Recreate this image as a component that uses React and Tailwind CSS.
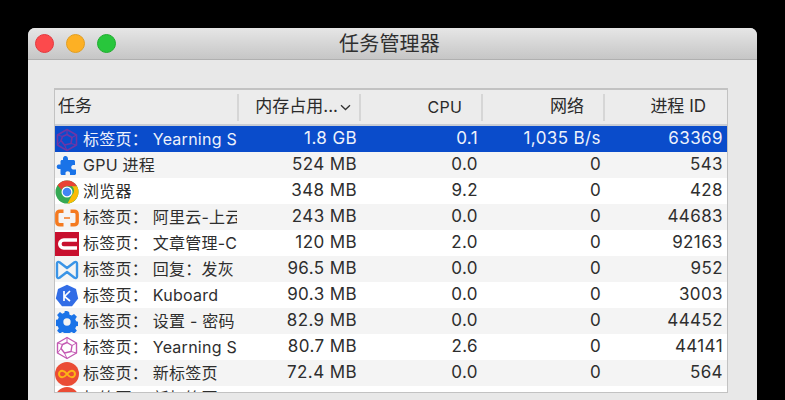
const FONT = "font-['Inter','Noto_Sans_CJK_SC',sans-serif]";

function Hex({ c, w = 1.6 }) {
  return (
    <svg width="22" height="24" viewBox="0 0 22 24" fill="none" stroke={c} strokeWidth={w} strokeLinejoin="round">
      <path d="M11 1.500 20.500 7v10L11 22.500 1.500 17V7z" />
      <path d="M11 6.500 16 9.500l-1 6-6.500 1.500L5 12.500 6.500 8.500z" />
      <path d="M11 1.500v5M20.500 7 16 9.500M15 15.500 20.500 17M8.500 17 11 22.500M5 12.500 1.500 17M6.500 8.500 1.500 7" strokeWidth={w * 0.7} />
    </svg>
  );
}

function Puzzle() {
  return (
    <svg width="22" height="22" viewBox="0 0 22 22">
      <path fill="#1a73e8" d="M8 1.500c2-1 4 0 4 2.500v1h5.500c.8 0 1.500.7 1.500 1.500V10h-1.500c-3-.4-3 5 0 4.500H20v4c0 .8-.7 1.500-1.500 1.500H14v-1.500c.4-3-5-3-4.500 0V20H6c-.8 0-1.500-.7-1.500-1.500V14H3c-3 .4-3-5 0-4.500h1.500V6.500C4.500 5.700 5.200 5 6 5h1V4c0-1 .2-2 1-2.500z" />
    </svg>
  );
}

function Chrome() {
  return (
    <svg width="24" height="24" viewBox="0 0 24 24">
      <circle cx="12" cy="12" r="11.500" fill="#34a853" />
      <path fill="#ea4335" d="M12 .5a11.500 11.500 0 0 1 10 5.800H12a5.700 5.700 0 0 0-5.300 3.600L2.600 5.200A11.500 11.500 0 0 1 12 .5z" />
      <path fill="#fbbc05" d="M22 6.300A11.500 11.500 0 0 1 12.500 23.500l4.500-8.500a5.700 5.700 0 0 0 0-8.700z" />
      <circle cx="12" cy="12" r="5.500" fill="#fff" />
      <circle cx="12" cy="12" r="4.300" fill="#4285f4" />
    </svg>
  );
}

function Aliyun() {
  return (
    <svg width="24" height="18" viewBox="0 0 24 18" fill="none" stroke="#f47a20" strokeWidth="3.400">
      <path d="M8.500 2.200H5C3 2.200 1.800 3.500 1.800 5.200v7.600c0 1.700 1.200 3 3.200 3h3.500M15.500 2.200H19c2 0 3.200 1.300 3.200 3v7.600c0 1.700-1.200 3-3.200 3h-3.500" />
      <path d="M9 9h6" strokeWidth="1.500" />
    </svg>
  );
}

function RedC() {
  return (
    <svg width="24" height="24" viewBox="0 0 24 24">
      <rect width="24" height="24" fill="#c8102e" />
      <path d="M22 8H8.800a4 4 0 0 0 0 8H22" fill="none" stroke="#fff" strokeWidth="3.600" />
    </svg>
  );
}

function Bow() {
  return (
    <svg width="24" height="20" viewBox="0 0 24 20" fill="none" stroke="#3a94e6" strokeWidth="2.400" strokeLinejoin="round">
      <path d="M2 3.500c0-1.500 1.300-2 2.500-1.300L12 8l7.500-5.800c1.200-.7 2.500-.2 2.500 1.300v13c0 1.500-1.300 2-2.500 1.300L12 12l-7.500 5.800C3.300 18.500 2 18 2 16.500z" />
    </svg>
  );
}

function Kube() {
  return (
    <svg width="24" height="24" viewBox="0 0 24 24">
      <path fill="#326de6" d="M12 .8 21 5l2.200 9.500-6.200 7.700H7l-6.200-7.700L3 5z" />
      <path d="M9 7v10M15 7l-5.500 5.500L15 17" fill="none" stroke="#fff" strokeWidth="1.700" />
    </svg>
  );
}

function Gear() {
  return (
    <svg width="22" height="22" viewBox="0 0 24 24">
      <path fill="#1a73e8" fillRule="evenodd" d="M14.300 1l.5 3 2.400 1 2.500-1.800 3.100 3.200-1.800 2.500 1 2.400 3 .5v4.300l-3 .5-1 2.400 1.800 2.500-3.100 3.200-2.500-1.800-2.400 1-.5 3H9.700l-.5-3-2.400-1-2.500 1.800-3.100-3.200 1.800-2.500-1-2.400-3-.5V9.800l3-.5 1-2.400-1.800-2.500 3.100-3.200 2.500 1.800 2.400-1 .5-3zM12 8a4 4 0 1 0 0 8 4 4 0 0 0 0-8z" />
    </svg>
  );
}

function Infinity8() {
  return (
    <svg width="24" height="24" viewBox="0 0 24 24">
      <circle cx="12" cy="12" r="12" fill="#ea4c35" />
      <path d="M12 12c-1.500-2-3-3.200-4.800-3.200a3.200 3.200 0 0 0 0 6.400c1.800 0 3.300-1.200 4.800-3.200s3-3.200 4.800-3.200a3.200 3.200 0 0 1 0 6.400c-1.800 0-3.300-1.200-4.800-3.200z" fill="none" stroke="#fdb515" strokeWidth="2" />
    </svg>
  );
}

const rows = [
  { icon: <Hex c="#6f35a5" />, name: "标签页： Yearning S", mem: "1.8 GB", cpu: "0.1", net: "1,035 B/s", pid: "63369" },
  { icon: <Puzzle />, name: "GPU 进程", mem: "524 MB", cpu: "0.0", net: "0", pid: "543" },
  { icon: <Chrome />, name: "浏览器", mem: "348 MB", cpu: "9.2", net: "0", pid: "428" },
  { icon: <Aliyun />, name: "标签页： 阿里云-上云", mem: "243 MB", cpu: "0.0", net: "0", pid: "44683" },
  { icon: <RedC />, name: "标签页： 文章管理-C", mem: "120 MB", cpu: "2.0", net: "0", pid: "92163" },
  { icon: <Bow />, name: "标签页： 回复：发灰", mem: "96.5 MB", cpu: "0.0", net: "0", pid: "952" },
  { icon: <Kube />, name: "标签页： Kuboard", mem: "90.3 MB", cpu: "0.0", net: "0", pid: "3003" },
  { icon: <Gear />, name: "标签页： 设置 - 密码", mem: "82.9 MB", cpu: "0.0", net: "0", pid: "44452" },
  { icon: <Hex c="#c45ab3" w={1.4} />, name: "标签页： Yearning S", mem: "80.7 MB", cpu: "2.6", net: "0", pid: "44141" },
  { icon: <Infinity8 />, name: "标签页： 新标签页", mem: "72.4 MB", cpu: "0.0", net: "0", pid: "564" },
  { icon: <Infinity8 />, name: "标签页： 新标签页", mem: "", cpu: "", net: "", pid: "" },
];

function Row({ r, i }) {
  const selected = i === 0;
  const bg = selected ? "bg-[#0a4ccb] text-[#eef2fb]" : i % 2 === 1 ? "bg-[#f4f4f4] text-[#2e2e2e]" : "bg-white text-[#2e2e2e]";
  return (
    <div className={`grid grid-cols-[184px_122px_122px_122px_122px] h-[26px] shrink-0 items-center ${bg}`}>
      <div className="flex items-center gap-[4px] pr-[2px] text-[16px] tracking-[0.25px]">
        <div className="w-[24px] h-[26px] shrink-0 flex items-center justify-center">{r.icon}</div>
        <div className="flex-1 min-w-0 overflow-hidden whitespace-nowrap pb-[2px]">{r.name}</div>
      </div>
      <div className="text-right pr-[4px] pb-[3px] text-[17px] tracking-[0.4px]">{r.mem}</div>
      <div className="text-right pr-[5px] pb-[3px] text-[17px] tracking-[0.4px]">{r.cpu}</div>
      <div className="text-right pr-[4px] pb-[3px] text-[17px] tracking-[0.4px]">{r.net}</div>
      <div className="text-right pr-[4px] pb-[3px] text-[17px] tracking-[0.4px]">{r.pid}</div>
    </div>
  );
}

function Head({ children, sep = true, className = "" }) {
  return (
    <div className={`h-[27px] flex items-center ${sep ? "border-r-2 border-[#d6d6d6]" : ""} ${className}`}>{children}</div>
  );
}

export default function App() {
  return (
    <div className={`h-screen bg-black pt-[28px] pl-[28px] pr-[28px] overflow-hidden ${FONT}`}>
      <div className="w-[729px] h-[372px] rounded-t-[7px] overflow-hidden bg-[#e8e8e8] flex flex-col">
        <div className="h-[32px] shrink-0 relative flex items-center justify-center pr-[6px] bg-gradient-to-b from-[#e6e6e6] to-[#c6c6c6] border-b border-[#b0b0b0]">
          <div className="absolute left-[7px] top-[6px] flex gap-[12px]">
            <div className="w-[19px] h-[19px] rounded-full bg-[#fc4a4c] border border-[#e2393f]" />
            <div className="w-[19px] h-[19px] rounded-full bg-[#fdb024] border border-[#e09e22]" />
            <div className="w-[19px] h-[19px] rounded-full bg-[#28c63c] border border-[#20ad30]" />
          </div>
          <span className="text-[20px] text-[#2f2f2f] tracking-[0.2px]">任务管理器</span>
        </div>
        <div className="ml-[26px] mt-[28px] w-[674px] h-[305px] shrink-0 flex flex-col overflow-hidden border border-t-2 border-[#c2c2c2] bg-white">
          <div className="grid grid-cols-[184px_122px_122px_122px_122px] h-[36px] shrink-0 items-center bg-[#ececec] border-b-2 border-[#c9cdd4] text-[17px] text-[#2a2a2a]">
            <Head className="pl-[3px]">任务</Head>
            <Head className="justify-end pr-[8px]">
              <span>内存占用...</span>
              <svg className="ml-[2px]" width="11" height="7" viewBox="0 0 11 7" fill="none" stroke="#333" strokeWidth="1.300"><path d="M1 1.200 5.500 5.500 10 1.200" /></svg>
            </Head>
            <Head className="justify-end pr-[19px] text-[16px] tracking-[0.2px]">CPU</Head>
            <Head className="justify-end pr-[19px]">网络</Head>
            <Head sep={false} className="justify-end pr-[21px]">进程 ID</Head>
          </div>
          {rows.map((r, i) => <Row key={i} r={r} i={i} />)}
        </div>
      </div>
    </div>
  );
}
